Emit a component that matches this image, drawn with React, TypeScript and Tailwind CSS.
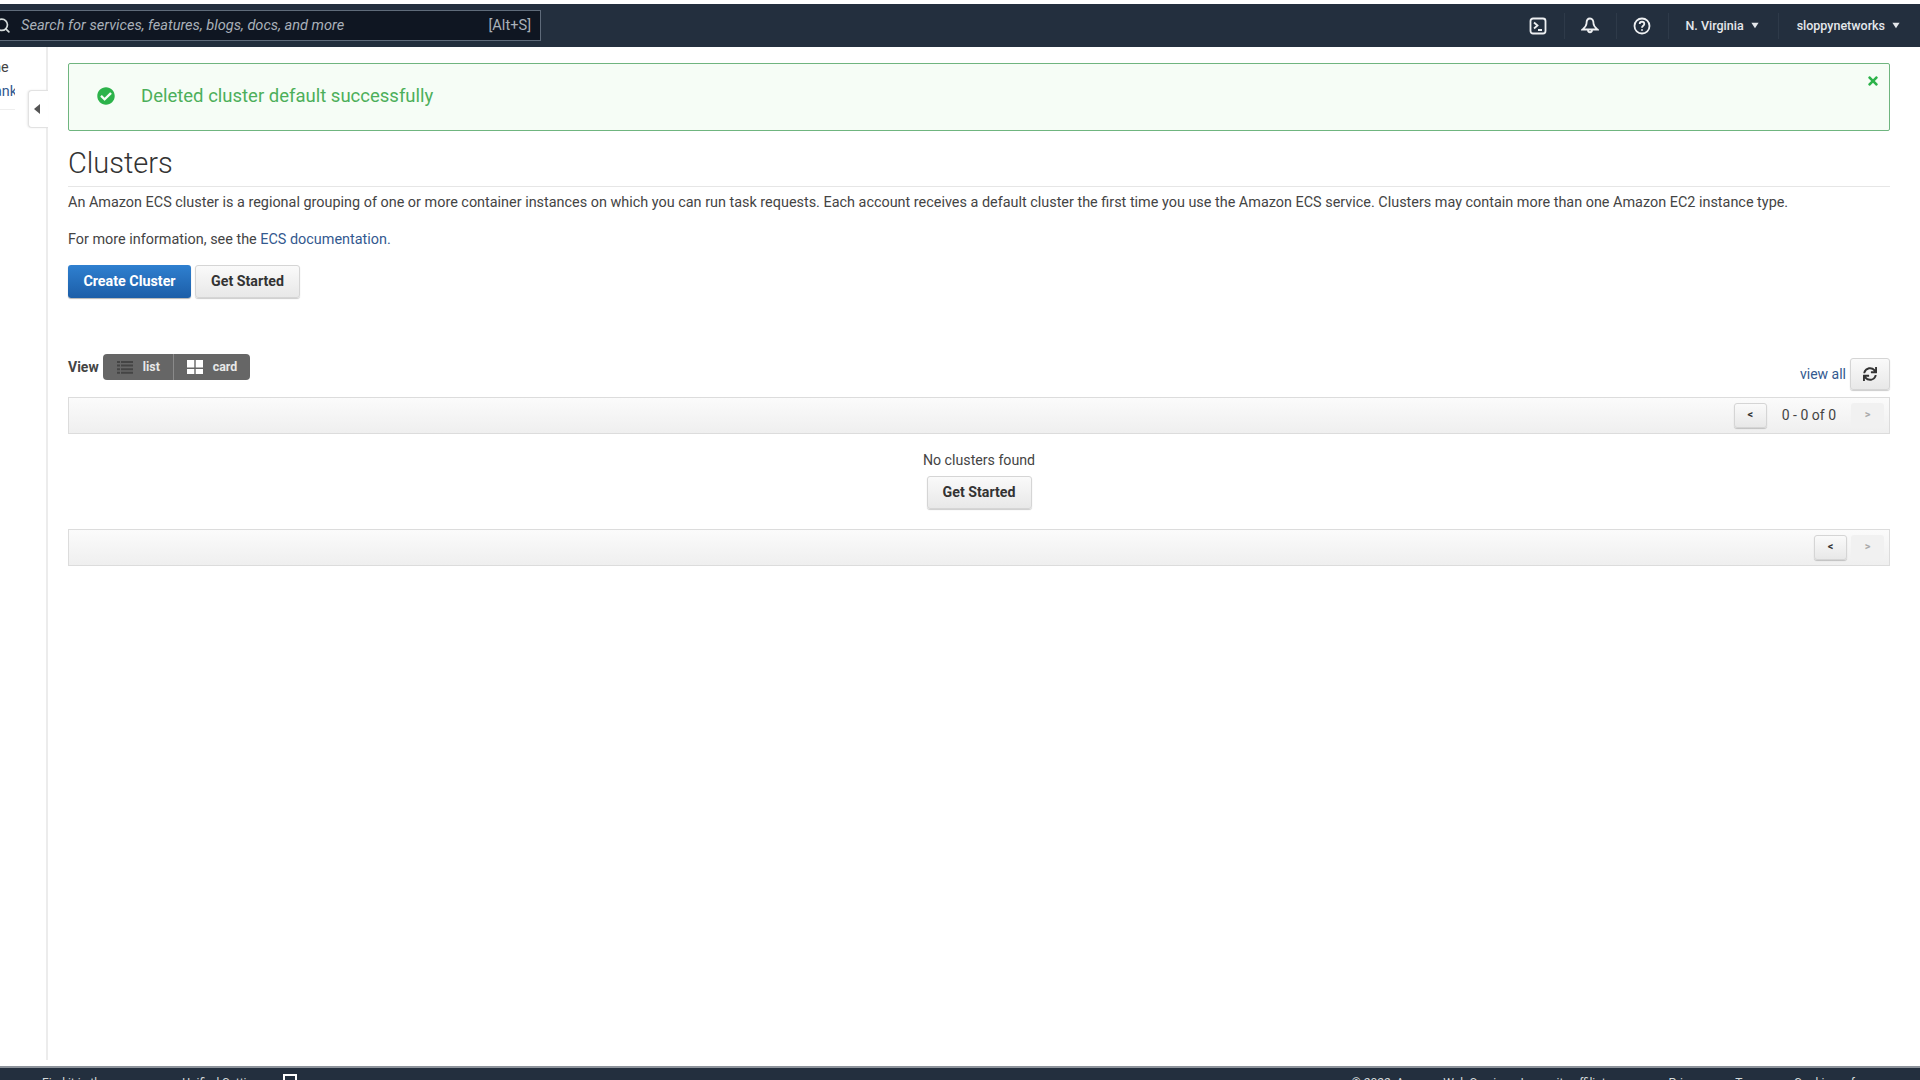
import { Search } from 'lucide-react';
import { FaCheckCircle, FaSync, FaTimes } from 'react-icons/fa';

const Caret = ({ className = '' }: { className?: string }) => (
    <svg viewBox="0 0 10 8" className={`h-[7px] w-[8px] fill-current ${className}`}>
        <path d="M0.5 0.5h9L5 7.5z" />
    </svg>
);

const Divider = () => <span className="mx-[16.5px] h-[26px] w-px bg-[#2e3a49]" />;

const GrayButton = ({ children, className = '' }: { children: React.ReactNode; className?: string }) => (
    <button className={`rounded-[3px] border border-[#d5d5d5] bg-gradient-to-b from-[#fafafa] to-[#e8e8e8] font-bold text-[#333] shadow-[0_1px_1px_rgba(0,0,0,0.2)] ${className}`}>
        {children}
    </button>
);

const PagerBar = ({ children }: { children: React.ReactNode }) => (
    <div className="flex h-[37px] items-center justify-end border border-[#dcdcdc] bg-gradient-to-b from-[#fbfbfb] to-[#efefef] pr-[5px]">{children}</div>
);

const Prev = ({ className = '' }: { className?: string }) => (
    <GrayButton className={`h-[25px] w-[33px] text-[11px] ${className}`}>&lt;</GrayButton>
);

const Next = () => (
    <span className="flex h-[25px] w-[33px] items-center justify-center rounded-[3px] bg-[#f1f1f1] text-[11px] font-bold text-[#aaa]">&gt;</span>
);

const Header = () => (
    <header className="flex h-[43px] shrink-0 items-center justify-between bg-[#232f3e] pr-[20px]">
        <div className="flex h-[31px] w-[541px] items-center justify-between border border-[#5f6b7a] border-l-0 bg-[#0f1622] pr-[9px] text-[14.6px] text-[#a9b0b9]">
            <div className="flex items-center">
                <Search size={17} strokeWidth={2.4} className="ml-[-6px] mr-[10px] text-[#d5dbdb]" />
                <span className="italic">Search for services, features, blogs, docs, and more</span>
            </div>
            <span>[Alt+S]</span>
        </div>
        <div className="flex items-center text-[12.5px] font-medium text-[#e4e7eb]">
            <svg viewBox="0 0 18 18" className="h-[18px] w-[18px] fill-none stroke-[#eef0f2] stroke-[1.8]">
                <rect x="1.5" y="1.5" width="15" height="15" rx="2.5" />
                <path d="M5 5.5l3.5 3L5 11.5M9 13h4" />
            </svg>
            <Divider />
            <svg viewBox="0 0 18 18" className="h-[18px] w-[18px] fill-none stroke-[#eef0f2] stroke-[1.8]">
                <path d="M9 1.5c-2.5 0-3.5 2.5-3.5 5 0 2.5-2.5 4.5-4 6h15c-1.5-1.5-4-3.5-4-6 0-2.5-1-5-3.5-5zM7 13c0 3 4 3 4 0" />
            </svg>
            <Divider />
            <svg viewBox="0 0 18 18" className="h-[18px] w-[18px] fill-none stroke-[#eef0f2] stroke-[1.8]">
                <circle cx="9" cy="9" r="7.5" />
                <path d="M6.7 7c0-3 4.6-3 4.6 0 0 1.8-2.3 1.8-2.3 3.7M9 12.3v1.5" />
            </svg>
            <Divider />
            <span className="mr-[7px] pt-px">N. Virginia</span>
            <Caret />
            <span className="ml-[19px] mr-[18px] h-[26px] w-px bg-[#2e3a49]" />
            <span className="mr-[7px] pt-px">sloppynetworks</span>
            <Caret />
        </div>
    </header>
);

const Sidebar = () => (
    <aside className="relative mb-[6px] w-[48px] shrink-0 border-r-2 border-[#ececec] text-[14.4px]">
        <div className="h-[63px] w-[15px] overflow-hidden border-b border-[#eeeeee] pt-[9px] leading-[24px]">
            <div className="ml-[-30px] text-[#444]">Home</div>
            <div className="ml-[-15px] text-[#33598f]">Bank</div>
        </div>
        <div className="absolute left-[28px] top-[43px] flex h-[38px] w-[20px] items-center justify-center rounded-l-[4px] border border-r-0 border-[#e2e2e2] bg-white shadow-[-1px_0_2px_rgba(0,0,0,0.08)]">
            <svg viewBox="0 0 6 10" className="mr-[4px] h-[10px] w-[6px] fill-[#555]">
                <path d="M6 0v10L0 5z" />
            </svg>
        </div>
    </aside>
);

const Alert = () => (
    <div className="relative flex h-[68px] items-center rounded-[2px] border border-[#6fb57f] bg-[#f6fdf6] pl-[28px]">
        <FaCheckCircle size={18} className="mb-[2px] mr-[26px] text-[#2cb34a]" />
        <span className="text-[18.5px] text-[#4caf5a]">Deleted cluster default successfully</span>
        <FaTimes size={14} className="absolute right-[9px] top-[10px] text-[#2cb34a]" />
    </div>
);

const Main = () => (
    <main className="min-w-0 flex-1 pl-[20px] pr-[30px] pt-[16px]">
        <Alert />
        <h1 className="mt-[15px] border-b border-[#e6e6e6] pb-[6px] text-[29px] font-light leading-[34px] text-[#333]">Clusters</h1>
        <p className="mt-[6px] text-[14.42px] leading-[20px] text-[#444]">
            An Amazon ECS cluster is a regional grouping of one or more container instances on which you can run task requests. Each account receives a default cluster the first time you use the Amazon ECS service. Clusters may contain more than one Amazon EC2 instance type.
        </p>
        <p className="mt-[17px] text-[14.42px] leading-[20px] text-[#444]">
            For more information, see the <a className="text-[#33598f]">ECS documentation.</a>
        </p>
        <div className="mt-[15px] flex gap-[4px]">
            <button className="h-[33px] w-[123px] rounded-[3px] bg-gradient-to-b from-[#2f80d0] to-[#1c5ea8] pt-px text-[14.3px] font-bold text-white shadow-[0_1px_1px_rgba(0,0,0,0.3)]">
                Create Cluster
            </button>
            <GrayButton className="h-[33px] w-[105px] pt-px text-[14.2px]">Get Started</GrayButton>
        </div>
        <div className="mt-[56px] flex items-start justify-between">
            <div className="flex items-center">
                <span className="mr-[4px] text-[14px] font-bold text-[#444]">View</span>
                <div className="flex h-[26px] w-[147px] items-center rounded-[4px] bg-[#666] text-[12.4px] font-bold text-[#e8e8e8]">
                    <div className="flex h-full w-[71px] items-center border-r border-[#8a8a8a] pl-[14px]">
                        <svg viewBox="0 0 16 13" className="mr-[10px] h-[13px] w-[16px] fill-[#444]">
                            <path d="M0 0h3v2H0zM4 0h12v2H4zM0 3.6h3v2H0zM4 3.6h12v2H4zM0 7.2h3v2H0zM4 7.2h12v2H4zM0 10.8h3v2H0zM4 10.8h12v2H4z" />
                        </svg>
                        list
                    </div>
                    <div className="flex h-full flex-1 items-center pl-[13px]">
                        <svg viewBox="0 0 16 14" className="mr-[10px] h-[14px] w-[16px] fill-white">
                            <path d="M0 0h7.3v7.5H0zM8.7 0H16v7.5H8.7zM0 9h7.3v5H0zM8.7 9H16v5H8.7z" />
                        </svg>
                        card
                    </div>
                </div>
            </div>
            <div className="mt-[4px] flex items-center">
                <a className="mr-[4px] text-[14px] text-[#33598f]">view all</a>
                <GrayButton className="flex h-[32px] w-[40px] items-center justify-center">
                    <FaSync size={14} className="text-[#333]" />
                </GrayButton>
            </div>
        </div>
        <div className="mt-[7px]">
            <PagerBar>
                <Prev />
                <span className="mx-[15px] text-[14px] text-[#444]">0 - 0 of 0</span>
                <Next />
            </PagerBar>
        </div>
        <div className="flex h-[95px] flex-col items-center pt-[16px]">
            <span className="text-[14.2px] leading-[20px] text-[#444]">No clusters found</span>
            <GrayButton className="mt-[6px] h-[33px] w-[105px] text-[14.2px]">Get Started</GrayButton>
        </div>
        <PagerBar>
            <Prev className="mr-[4px]" />
            <Next />
        </PagerBar>
    </main>
);

const Footer = () => (
    <footer className="flex h-[14px] shrink-0 justify-between overflow-hidden border-t-2 border-[#8d939b] bg-[#232f3e] pl-[42px] pr-[23px] pt-[7px] text-[12px] leading-[16px] text-[#d5dbdb]">
        <div className="flex items-start">
            <span className="mr-[50px]">Find it in the new</span>
            <span className="mr-[17px]">Unified Settings</span>
            <span className="mt-[-1px] h-[14px] w-[14px] border-2 border-white" />
        </div>
        <div className="flex">
            <span className="mr-[47px]">© 2022, Amazon Web Services, Inc. or its affiliates.</span>
            <span className="mr-[28px]">Privacy</span>
            <span className="mr-[25px]">Terms</span>
            <span>Cookie preferences</span>
        </div>
    </footer>
);

export default function App() {
    return (
        <div className="flex h-[1080px] w-[1920px] flex-col overflow-hidden bg-white pt-[4px] font-['Roboto',sans-serif]">
            <Header />
            <div className="flex min-h-0 flex-1">
                <Sidebar />
                <Main />
            </div>
            <Footer />
        </div>
    );
}
